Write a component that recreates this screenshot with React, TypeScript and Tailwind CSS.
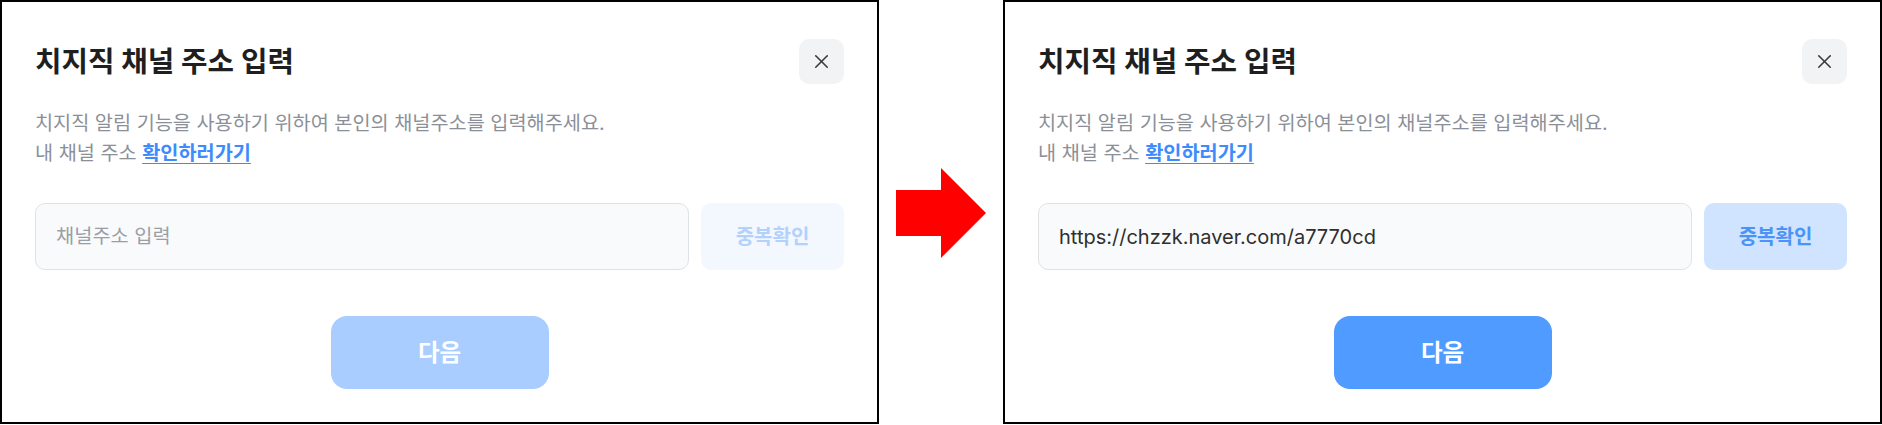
import { X } from "lucide-react";

type PanelProps = {
  value?: string;
  active?: boolean;
};

function Panel({ value, active }: PanelProps) {
  return (
    <div className="w-[879px] h-[424px] shrink-0 border-2 border-black bg-white pt-[37px] px-[33px] flex flex-col">
      <div className="flex items-center justify-between h-[45px]">
        <h2 className="text-[28.8px] font-bold text-[#1f1f1f]">
          치지직 채널 주소 입력
        </h2>
        <button className="w-[45px] h-[45px] rounded-[10px] bg-[#f2f3f5] flex items-center justify-center text-[#3a3a3a]">
          <X size={23} strokeWidth={1.6} />
        </button>
      </div>

      <div className="mt-[24px] text-[19.7px] leading-[30px] text-[#8b9098]">
        <p>치지직 알림 기능을 사용하기 위하여 본인의 채널주소를 입력해주세요.</p>
        <p>
          내 채널 주소{" "}
          <a className="text-[#3d8bfd] font-semibold underline underline-offset-[3px]">
            확인하러가기
          </a>
        </p>
      </div>

      <div className="mt-[35px] flex gap-[12px]">
        <div className="w-[654px] h-[67px] rounded-[10px] border-[1.5px] border-[#e0e2e6] bg-[#f9fafb] flex items-center px-[20px]">
          {value ? (
            <span className="text-[20px] text-[#2f2f2f]">{value}</span>
          ) : (
            <span className="text-[19.8px] text-[#9a9ea5]">채널주소 입력</span>
          )}
        </div>
        <button
          className={
            active
              ? "w-[143px] h-[67px] rounded-[10px] bg-[#d0e3ff] text-[#4b93f7] text-[20px] font-semibold"
              : "w-[143px] h-[67px] rounded-[10px] bg-[#f3f8ff] text-[#b3d1fd] text-[20px] font-semibold"
          }
        >
          중복확인
        </button>
      </div>

      <div className="mt-[46px] flex justify-center">
        <button
          className={
            active
              ? "w-[218px] h-[73px] rounded-[16px] bg-[#4f9bff] text-white text-[23.5px] font-bold"
              : "w-[218px] h-[73px] rounded-[16px] bg-[#a9cdff] text-white text-[23.5px] font-bold"
          }
        >
          다음
        </button>
      </div>
    </div>
  );
}

export default function App() {
  return (
    <div className="flex w-[1882px] h-[425px] bg-white font-['Inter','Noto_Sans_CJK_KR',sans-serif]">
      <Panel />
      <div className="w-[124px] shrink-0 flex items-center justify-center">
        <svg width="90" height="90" viewBox="0 0 90 90">
          <polygon points="0,22 45,22 45,0 90,45 45,90 45,68 0,68" fill="#ff0000" />
        </svg>
      </div>
      <Panel value="https://chzzk.naver.com/a7770cd" active />
    </div>
  );
}
